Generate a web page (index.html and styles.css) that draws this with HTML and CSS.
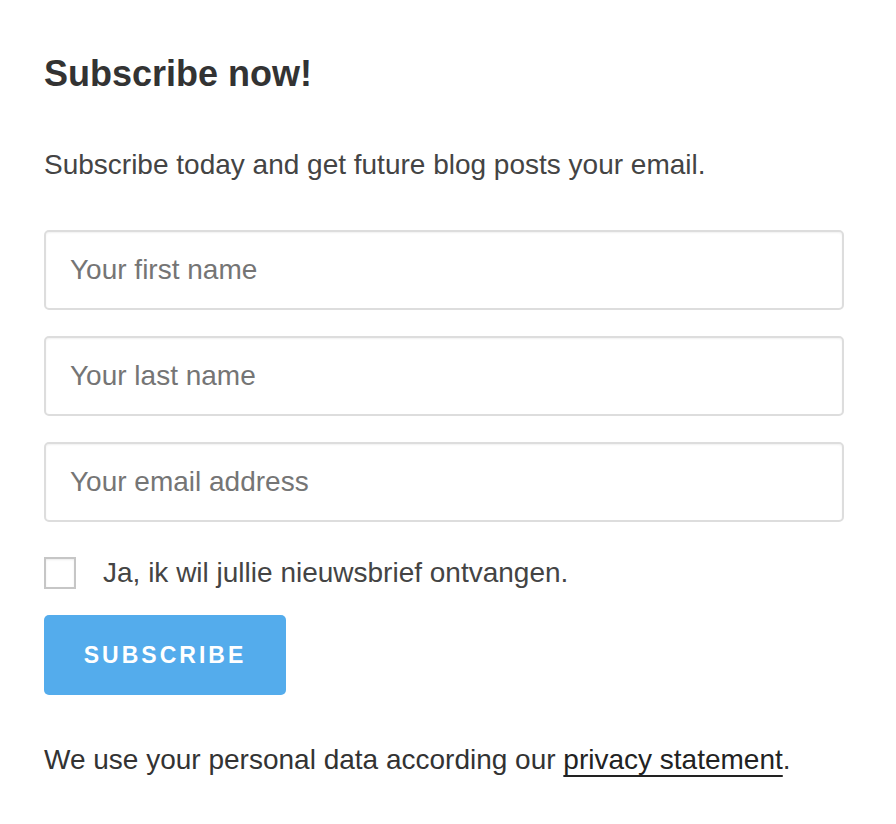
FILE: index.html
```html
<!DOCTYPE html>
<html lang="en">
  <head>
    <meta charset="UTF-8" />
    <meta name="viewport" content="width=device-width, initial-scale=1.0" />
    <title>Subscribe</title>
    <link rel="stylesheet" href="styles.css">
  </head>
  <body>
    <div class="subscribe">
      <h2 class="title">Subscribe now!</h2>
      <p class="intro">Subscribe today and get future blog posts your email.</p>

      <form class="form">
        <input class="field" type="text" placeholder="Your first name" />
        <input class="field" type="text" placeholder="Your last name" />
        <input class="field" type="email" placeholder="Your email address" />

        <label class="check">
          <span class="box"></span>
          <span>Ja, ik wil jullie nieuwsbrief ontvangen.</span>
        </label>

        <button class="btn" type="button">Subscribe</button>
      </form>

      <p class="note">We use your personal data according our <a href="#">privacy statement</a>.</p>
    </div>
  </body>
</html>
```

FILE: styles.css
```css
* {
  margin: 0;
  padding: 0;
  box-sizing: border-box;
}

body {
  background: #fff;
  font-family: "Liberation Sans", Arial, sans-serif;
  color: #333;
}

.subscribe {
  width: 800px;
  margin-left: 44px;
  padding-top: 52px;
}

.title {
  font-size: 36px;
  line-height: 44px;
  font-weight: bold;
  color: #333;
}

.intro {
  margin-top: 52px;
  font-size: 28px;
  line-height: 34px;
  color: #444;
}

.form {
  margin-top: 48px;
  display: flex;
  flex-direction: column;
  align-items: flex-start;
}

.field {
  width: 800px;
  height: 80px;
  margin-bottom: 26px;
  padding: 0 24px;
  border: 2px solid #ddd;
  border-radius: 5px;
  box-shadow: inset 0 1px 2px rgba(0, 0, 0, 0.06);
  font-family: inherit;
  font-size: 28px;
  color: #333;
  outline: none;
}

.field::placeholder {
  color: #757575;
}

.check {
  display: flex;
  align-items: center;
  gap: 27px;
  margin-top: 9px;
  height: 32px;
  font-size: 28px;
  color: #444;
}

.check .box {
  width: 32px;
  height: 32px;
  border: 2px solid #c6c6c6;
  background: #fff;
  box-shadow: inset 0 1px 2px rgba(0, 0, 0, 0.08);
}

.btn {
  margin-top: 26px;
  width: 242px;
  height: 80px;
  border: none;
  border-radius: 5px;
  background: #54acec;
  color: #fff;
  font-family: inherit;
  font-size: 23px;
  font-weight: bold;
  letter-spacing: 3px;
  text-transform: uppercase;
}

.note {
  margin-top: 48px;
  font-size: 28px;
  line-height: 34px;
  color: #333;
}

.note a {
  color: #222;
  text-decoration: underline;
  text-underline-offset: 6px;
  text-decoration-thickness: 2px;
}
```
